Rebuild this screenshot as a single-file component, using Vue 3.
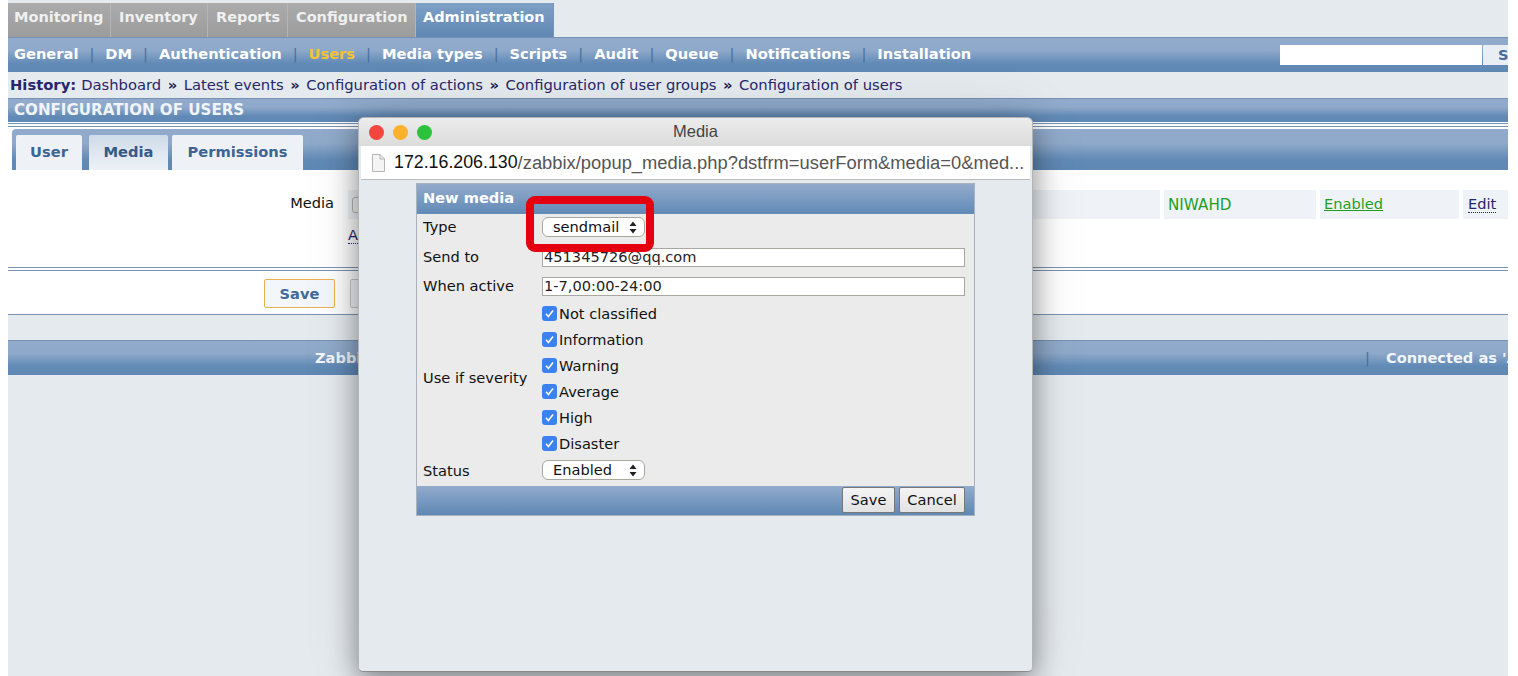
<script setup>
const mainTabs = [
  { label: 'Monitoring', w: 103 },
  { label: 'Inventory', w: 97 },
  { label: 'Reports', w: 80 },
  { label: 'Configuration', w: 128 },
  { label: 'Administration', w: 138, active: true },
]
const subNav = ['General', 'DM', 'Authentication', 'Users', 'Media types', 'Scripts', 'Audit', 'Queue', 'Notifications', 'Installation']
const history = ['Dashboard', 'Latest events', 'Configuration of actions', 'Configuration of user groups', 'Configuration of users']
const severities = ['Not classified', 'Information', 'Warning', 'Average', 'High', 'Disaster']
</script>

<template>
  <div class="page">
    <div class="main-tabs">
      <div
        v-for="t in mainTabs"
        :key="t.label"
        class="main-tab"
        :class="{ active: t.active }"
        :style="{ width: t.w + 'px' }"
      >{{ t.label }}</div>
    </div>

    <div class="sub-nav bar">
      <template v-for="(s, i) in subNav" :key="s">
        <span v-if="i" class="sep">|</span>
        <span class="sub-item" :class="{ current: s === 'Users' }">{{ s }}</span>
      </template>
      <div class="search">
        <div class="search-input"></div>
        <div class="search-btn">S</div>
      </div>
    </div>

    <div class="history">
      <b class="history-label">History:</b>
      <template v-for="(h, i) in history" :key="h">
        <span v-if="i" class="raquo">»</span>
        <span>{{ h }}</span>
      </template>
    </div>

    <div class="title-bar bar">CONFIGURATION OF USERS</div>
    <div class="double-line"></div>

    <div class="tabs-wrap">
      <div class="form-tabs bar">
        <div class="form-tab tab-user">User</div>
        <div class="form-tab tab-media selected">Media</div>
        <div class="form-tab tab-perm">Permissions</div>
      </div>
    </div>

    <div class="media-section">
      <div class="media-label">Media</div>
      <div class="media-col">
        <div class="media-row">
          <div class="cell cell-main"><span class="mini-check"></span></div>
          <div class="cell cell-period"></div>
          <div class="cell cell-sev green">NIWAHD</div>
          <div class="cell cell-status green link">Enabled</div>
          <div class="cell cell-edit"><span class="dotted">Edit</span></div>
        </div>
        <div class="add-link"><span class="dotted">Add</span></div>
      </div>
    </div>
    <div class="double-line tight"></div>

    <div class="actions">
      <div class="btn-save">Save</div>
      <div class="btn-other"></div>
    </div>

    <div class="spacer"></div>

    <div class="footer bar">
      <span class="footer-copy">Zabbix</span>
      <span class="sep footer-sep">|</span>
      <span class="footer-user">Connected as 'Admin'</span>
    </div>

    <div class="window">
      <div class="win-title">
        <span class="light red"></span>
        <span class="light amber"></span>
        <span class="light lime"></span>
        <span class="win-name">Media</span>
      </div>
      <div class="win-url">
        <svg class="doc" width="14" height="18" viewBox="0 0 14 18">
          <path d="M1.5 .5H9L13.5 5V17.5H1.5Z" fill="#f4f4f4" stroke="#b5b5b5" />
          <path d="M9 .5V5H13.5" fill="none" stroke="#b5b5b5" />
        </svg>
        <span class="host">172.16.206.130</span><span class="path">/zabbix/popup_media.php?dstfrm=userForm&amp;media=0&amp;med...</span>
      </div>

      <div class="panel">
        <div class="panel-head">New media</div>
        <div class="panel-body">
          <div class="row row-type">
            <div class="lbl">Type</div>
            <div class="select">sendmail
              <svg class="updown" width="8" height="13" viewBox="0 0 8 13"><path d="M4 0.5L7.5 5H.5ZM4 12.5L.5 8H7.5Z" fill="#222" /></svg>
            </div>
          </div>
          <div class="row row-send">
            <div class="lbl">Send to</div>
            <div class="input">451345726@qq.com</div>
          </div>
          <div class="row row-when">
            <div class="lbl">When active</div>
            <div class="input">1-7,00:00-24:00</div>
          </div>
          <div class="row row-sev">
            <div class="lbl">Use if severity</div>
            <div class="checks">
              <div v-for="s in severities" :key="s" class="check-row">
                <span class="check">
                  <svg width="15" height="15" viewBox="0 0 15 15"><path d="M4 7.8L6.4 10.6L11 4.6" fill="none" stroke="#fff" stroke-width="1.6" /></svg>
                </span>
                <span>{{ s }}</span>
              </div>
            </div>
          </div>
          <div class="row row-status">
            <div class="lbl">Status</div>
            <div class="select">Enabled
              <svg class="updown" width="8" height="13" viewBox="0 0 8 13"><path d="M4 0.5L7.5 5H.5ZM4 12.5L.5 8H7.5Z" fill="#222" /></svg>
            </div>
          </div>
        </div>
        <div class="panel-foot">
          <div class="btn-gray btn-gray-save">Save</div>
          <div class="btn-gray btn-gray-cancel">Cancel</div>
        </div>
      </div>
    </div>

    <div class="highlight"></div>
  </div>
</template>

<style>
html, body { margin: 0; background: #fff; overflow: hidden; }
</style>

<style scoped>
.page {
  position: relative;
  box-sizing: border-box;
  width: 1500px;
  height: 676px;
  margin: 0 10px 0 8px;
  padding-top: 3px;
  background: #e5eaef;
  box-shadow: 0 -3px 0 #fff;
  font-family: "DejaVu Sans", Verdana, sans-serif;
  font-size: 14.6px;
  color: #111;
}
.bar { background: linear-gradient(#92abcc 0%, #8fa9ca 35%, #618ab6 75%, #5f88b4 100%); }

.main-tabs { display: flex; height: 34px; }
.main-tab {
  box-sizing: border-box;
  padding: 6px 0 0 8px;
  height: 34px;
  border-right: 1px solid #b5b5b5;
  background: linear-gradient(#ababab, #9c9c9c);
  color: #f0f0f0;
  font-weight: 700;
  font-size: 14.5px;
  white-space: nowrap;
}
.main-tab:first-child { padding-left: 6px; }
.main-tab.active {
  padding-left: 7px;
  background: linear-gradient(#7fa0c6, #5f88b4);
  border-right: 1px solid #7b93b2;
  color: #fff;
}

.sub-nav {
  display: flex;
  align-items: center;
  box-sizing: border-box;
  height: 35px;
  border-top: 1px solid #7590b3;
  padding: 0 0 3px 6px;
  color: #fff;
  font-weight: 700;
  font-size: 14.65px;
  white-space: nowrap;
}
.sep { margin: 0 11px; font-weight: 400; color: #4a6f9c; }
.sub-item.current { color: #f4c430; }
.search { display: flex; margin-left: auto; margin-top: 3px; height: 20px; overflow: hidden; }
.search-input { width: 202px; background: #fff; }
.search-btn {
  box-sizing: border-box;
  width: 25px;
  margin-left: 1px;
  padding: 1px 0 0 15px;
  background: #e9eef4;
  color: #456b9a;
}

.history {
  display: flex;
  align-items: center;
  box-sizing: border-box;
  height: 26px;
  padding: 0 0 2px 2px;
  color: #28266b;
  font-size: 14.75px;
  white-space: nowrap;
}
.history-label { margin-right: 5px; }
.raquo { margin: 0 6.5px; font-weight: 700; color: #1c1c50; }

.title-bar {
  box-sizing: border-box;
  height: 24px;
  border-top: 1px solid #7590b3;
  padding: 2px 0 0 6px;
  color: #f0f4f8;
  font-weight: 700;
  font-size: 15.1px;
  line-height: 18px;
}
.double-line {
  height: 7px;
  background: #fff linear-gradient(#fff 1px, #7b93b2 1px, #7b93b2 2px, #fff 2px, #fff 4px, #7b93b2 4px, #7b93b2 5px, #fff 5px);
}
.tabs-wrap { background: #fff; padding-left: 4px; }
.form-tabs {
  display: flex;
  align-items: flex-end;
  box-sizing: border-box;
  height: 41px;
  padding-left: 3px;
  gap: 4px;
  border-radius: 4px 0 0 0;
}
.form-tab {
  box-sizing: border-box;
  height: 35px;
  padding-top: 8px;
  text-align: center;
  background: #eef2f7;
  color: #3d6495;
  font-weight: 700;
  font-size: 14.7px;
  border-radius: 2px 2px 0 0;
}
.tab-user { width: 66px; margin-left: 1px; }
.tab-media { width: 79px; margin-left: 3px; }
.tab-perm { width: 131px; }
.form-tab.selected {
  background: linear-gradient(#cfdbe9, #eef2f7);
  color: #36598a;
}

.media-section { display: flex; height: 97px; background: #fff; padding-top: 20px; box-sizing: border-box; }
.media-label { flex: none; width: 326px; padding-top: 4px; text-align: right; box-sizing: border-box; }
.media-col { margin-left: 14px; flex: 1; min-width: 0; }
.media-row { display: flex; gap: 4px; height: 29px; align-items: center; }
.cell {
  flex: none;
  box-sizing: border-box;
  height: 29px;
  padding: 5px 0 0 4px;
  background: #eff3f8;
  white-space: nowrap;
}
.cell-main { width: 340px; }
.mini-check {
  display: block;
  width: 13px;
  height: 16px;
  margin-top: 2px;
  border: 1px solid #b7b7b7;
  border-radius: 3px;
  background: #f4f4f4;
  box-sizing: border-box;
}
.cell-period { width: 468px; }
.cell-sev { width: 152px; font-size: 15.2px; padding-top: 6px; }
.cell-status { width: 139px; }
.cell-edit { width: 45px; padding-left: 5px; color: #28266b; }
.green { color: #1f9e1f; }
.link { text-decoration: underline; }
.dotted { border-bottom: 1px dotted #28266b; }
.add-link { padding-top: 7px; color: #28266b; }

.double-line.tight { height: 4px; background: #fff linear-gradient(#7b93b2 1px, #fff 1px, #fff 3px, #7b93b2 3px); }

.actions {
  display: flex;
  align-items: flex-start;
  box-sizing: border-box;
  height: 44px;
  padding: 8px 0 0 256px;
  gap: 15px;
  background: #fff;
  border-bottom: 1px solid #7b93b2;
}
.btn-save, .btn-other {
  box-sizing: border-box;
  width: 71px;
  height: 29px;
  border: 1px solid #eeb04e;
  border-radius: 2px;
  background: #f3f6fa;
  color: #41699b;
  font-weight: 700;
  text-align: center;
  line-height: 27px;
}
.btn-other { border-color: #c8c8c8; }
.spacer { height: 25px; }
.footer {
  display: flex;
  align-items: center;
  box-sizing: border-box;
  height: 35px;
  border-top: 1px solid #7590b3;
  padding: 0 0 2px 307px;
  color: #f2f5f9;
  font-weight: 700;
  white-space: nowrap;
  overflow: hidden;
}
.footer-copy { width: 1050px; flex: none; }
.footer-sep { margin: 0 16px 0 0; }
.footer-user { flex: none; }

.window {
  position: absolute;
  left: 350px;
  top: 117px;
  width: 675px;
  height: 555px;
  box-sizing: border-box;
  border: 1px solid #b4b4b4;
  border-bottom-color: #8a8a8a;
  border-radius: 6px 6px 5px 5px;
  background: #e5eaef;
  box-shadow: 0 8px 28px rgba(0, 0, 0, .42), 0 0 60px rgba(0, 0, 0, .1);
}
.win-title {
  display: flex;
  align-items: center;
  position: relative;
  height: 28px;
  padding-left: 10px;
  gap: 9px;
  border-radius: 5px 5px 0 0;
  background: linear-gradient(#ececec, #dcdcdc);
}
.light { width: 15px; height: 15px; border-radius: 50%; flex: none; }
.red { background: #f2463f; }
.amber { background: #fbb12c; }
.lime { background: #2cc23c; }
.win-name {
  position: absolute;
  left: 0;
  right: 0;
  top: 4px;
  text-align: center;
  color: #444;
  font-family: "Liberation Sans", Arial, sans-serif;
  font-size: 16.5px;
}
.win-url {
  display: flex;
  align-items: center;
  box-sizing: border-box;
  height: 34px;
  margin: 0 2px;
  padding-left: 10px;
  background: #fff;
  border-bottom: 1px solid #bbb;
  font-family: "Liberation Sans", Arial, sans-serif;
  font-size: 17.8px;
  white-space: nowrap;
  overflow: hidden;
}
.doc { margin-right: 9px; flex: none; }
.host { color: #111; }
.path { color: #555; font-size: 18.35px; }

.panel {
  box-sizing: border-box;
  width: 559px;
  height: 333px;
  margin: 3px 0 0 57px;
  border: 1px solid #a9b2bc;
  background: #ebebeb;
  display: flex;
  flex-direction: column;
}
.panel-head {
  box-sizing: border-box;
  height: 30px;
  padding: 5px 0 0 6px;
  background: linear-gradient(#92abcc, #618ab6);
  color: #fff;
  font-weight: 700;
}
.panel-body { flex: 1; display: flex; flex-direction: column; }
.row { display: flex; align-items: center; }
.lbl { width: 125px; padding: 0 0 2px 6px; box-sizing: border-box; flex: none; }
.row-type { height: 26px; }
.row-send { height: 30px; margin-top: 2px; }
.row-when { height: 28px; }
.row-status { height: 26px; margin-top: 1px; }
.row-status .lbl { padding-bottom: 0; }
.select {
  position: relative;
  box-sizing: border-box;
  width: 103px;
  height: 20px;
  padding-left: 10px;
  line-height: 18px;
  background: #fff;
  border: 1px solid #a8a8a0;
  border-radius: 6px;
  white-space: nowrap;
}
.updown { position: absolute; right: 7px; top: 3px; }
.input {
  box-sizing: border-box;
  width: 423px;
  height: 19px;
  margin-top: 1px;
  padding-left: 1px;
  line-height: 16px;
  background: #fff;
  border: 1px solid #a8a8a0;
  color: #222;
  white-space: nowrap;
}
.checks { display: flex; flex-direction: column; }
.check-row { display: flex; align-items: center; height: 26px; gap: 2px; }
.check {
  display: block;
  width: 15px;
  height: 15px;
  border-radius: 3px;
  background: #3b82f0;
}
.panel-foot {
  display: flex;
  justify-content: flex-end;
  align-items: flex-start;
  gap: 4px;
  box-sizing: border-box;
  height: 29px;
  padding: 1px 9px 0 0;
  background: linear-gradient(#92abcc, #5f88b4);
}
.btn-gray {
  box-sizing: border-box;
  height: 26px;
  text-align: center;
  line-height: 24px;
  border: 1px solid #777;
  border-radius: 2px;
  background: linear-gradient(#f4f4f4, #e2e2e2);
  color: #111;
}
.btn-gray-save { width: 53px; }
.btn-gray-cancel { width: 66px; }

.highlight {
  position: absolute;
  left: 518px;
  top: 196px;
  width: 128px;
  height: 56px;
  box-sizing: border-box;
  border: 8px solid #e4000f;
  border-radius: 9px;
}
</style>
